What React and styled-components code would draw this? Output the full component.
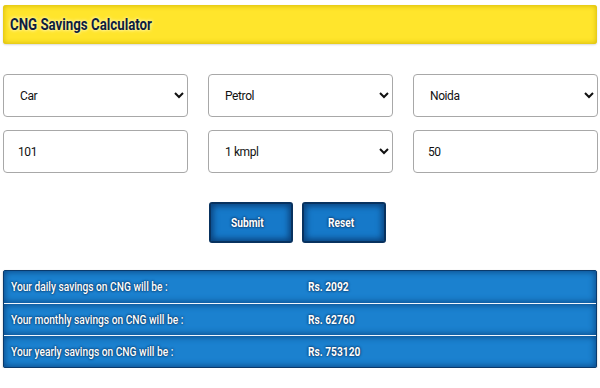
import React from 'react';
import styled, { createGlobalStyle } from 'styled-components';

const Global = createGlobalStyle`
  * { box-sizing: border-box; }
  body {
    margin: 0;
    background: #fff;
    font-family: Roboto, "Liberation Sans", sans-serif;
  }
`;

const Page = styled.div`
  width: 600px;
  padding: 5px 3px 0 3px;
`;

const Header = styled.div`
  height: 39px;
  background: #ffe52c;
  border-radius: 3px;
  box-shadow: inset 0 0 5px 1px #d9bd0a, 0 1px 2px rgba(0, 0, 0, 0.15);
  display: flex;
  align-items: center;
  padding-left: 7px;
`;

const Squeeze = styled.span`
  display: inline-block;
  transform: scaleX(${p => p.$x || 0.82});
  transform-origin: left center;
  white-space: nowrap;
`;

const Title = styled.h1`
  margin: 0;
  font-size: 16px;
  font-weight: 700;
  color: #0e1d3d;
  text-shadow: 0 0 3px #fffbd0, 0 0 5px #fff6a0;
`;

const Form = styled.div`
  margin-top: 30px;
  display: grid;
  grid-template-columns: repeat(3, 185px);
  column-gap: 20px;
  row-gap: 13px;
`;

const fieldBase = `
  height: 43px;
  width: 100%;
  border: 1px solid #a8a8a8;
  border-radius: 4px;
  background: #fff;
  color: #111;
  font-family: Roboto, "Liberation Sans", sans-serif;
  font-size: 12px;
  letter-spacing: -0.4px;
  padding: 0 8px 0 14px;
  outline: none;
`;

const Select = styled.select`
  ${fieldBase}
  padding-left: 12px;
`;

const Input = styled.input`
  ${fieldBase}
`;

const Buttons = styled.div`
  margin-top: 29px;
  display: flex;
  justify-content: center;
  gap: 9px;
  padding-right: 6px;
`;

const Button = styled.button`
  width: 84px;
  height: 41px;
  border: 2px solid #08325f;
  border-radius: 3px;
  background: #1679c9;
  box-shadow: inset 0 0 6px 2px #0a3f78;
  color: #fff;
  font-family: Roboto, "Liberation Sans", sans-serif;
  font-size: 12px;
  font-weight: 700;
  text-shadow: 0 0 3px #052b57, 0 0 2px #052b57;
  cursor: pointer;
  display: flex;
  align-items: center;
  justify-content: center;
`;

const Results = styled.div`
  margin-top: 27px;
  border: 1px solid #0a3a6c;
  border-radius: 2px;
  background: #1b81cf;
  box-shadow: 0 1px 2px rgba(0, 0, 0, 0.3);
  overflow: hidden;
`;

const Row = styled.div`
  display: grid;
  grid-template-columns: 296px 1fr;
  height: 32px;
  align-items: center;
  box-shadow: inset 0 0 6px 1px #0b4a88;
  border-top: ${p => (p.$first ? 'none' : '1px solid #f2f7fc')};
  color: #fff;
  font-size: 12px;
  font-weight: 500;
  text-shadow: 0 0 3px #06305c, 0 0 2px #06305c;
`;

const Label = styled.div`
  padding-left: 7px;
`;

const Value = styled.div`
  padding-left: 8px;
  font-weight: 700;
`;

const results = [
  ['Your daily savings on CNG will be :', 'Rs. 2092'],
  ['Your monthly savings on CNG will be :', 'Rs. 62760'],
  ['Your yearly savings on CNG will be :', 'Rs. 753120'],
];

export default function App() {
  return (
    <Page>
      <Global />
      <Header>
        <Title>
          <Squeeze $x={0.83}>CNG Savings Calculator</Squeeze>
        </Title>
      </Header>
      <Form>
        <Select defaultValue="Car">
          <option>Car</option>
          <option>Bike</option>
        </Select>
        <Select defaultValue="Petrol">
          <option>Petrol</option>
          <option>Diesel</option>
        </Select>
        <Select defaultValue="Noida">
          <option>Noida</option>
          <option>Delhi</option>
        </Select>
        <Input defaultValue="101" />
        <Select defaultValue="1 kmpl">
          <option>1 kmpl</option>
          <option>2 kmpl</option>
        </Select>
        <Input defaultValue="50" />
      </Form>
      <Buttons>
        <Button><Squeeze $x={0.85}>Submit</Squeeze></Button>
        <Button><Squeeze $x={0.85}>Reset</Squeeze></Button>
      </Buttons>
      <Results>
        {results.map(([l, v], i) => (
          <Row key={l} $first={i === 0}>
            <Label><Squeeze $x={0.85}>{l}</Squeeze></Label>
            <Value><Squeeze $x={0.85}>{v}</Squeeze></Value>
          </Row>
        ))}
      </Results>
    </Page>
  );
}
